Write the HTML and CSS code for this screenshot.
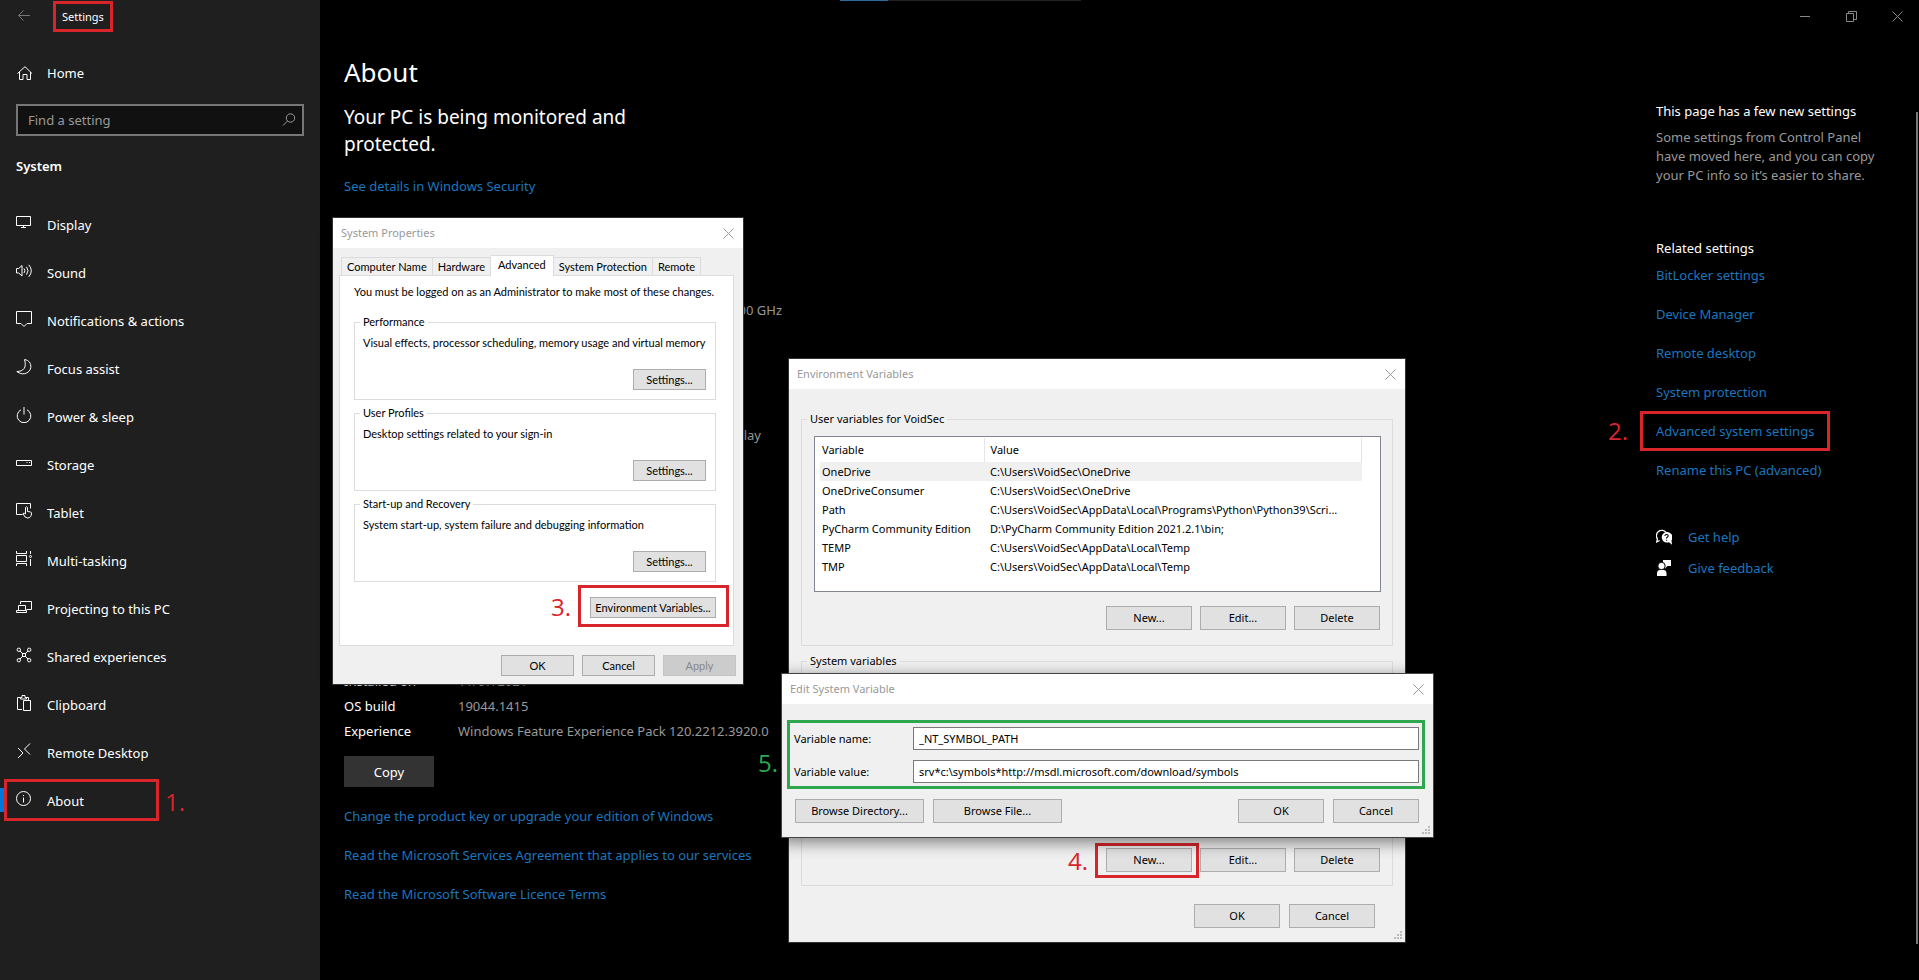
FILE: index.html
```html
<!DOCTYPE html>
<html lang="en">
<head>
<meta charset="utf-8">
<title>Settings</title>
<link rel="stylesheet" href="styles.css">
</head>
<body>
<div class="top-strip"><span class="top-strip-active"></span></div>

<div class="settings">
  <aside class="sidebar">
    <header class="titlebar">
      <button class="back" aria-label="Back"><svg class="icon" viewBox="0 0 16 16"><path d="M14 7.500H2.500M7.500 2.500l-5 5 5 5"/></svg></button>
      <span class="app-name">Settings<span class="frame frame-app"></span></span>
    </header>
    <a class="nav-link home" href="#"><svg class="icon" viewBox="0 0 16 16"><path d="M1.500 8.500L9 1.700l7 6.800M3.500 7v7.500h3.500v-5h4v5h3.500V7"/></svg>Home</a>
    <div class="search">
      <input type="search" aria-label="Find a setting" placeholder="Find a setting">
      <svg class="icon" viewBox="0 0 16 16"><circle cx="9.500" cy="6" r="4.200"/><path d="M6.500 9L2 13.500"/></svg>
    </div>
    <h2 class="section">System</h2>
    <nav class="nav">
      <a class="nav-link" href="#"><svg class="icon" viewBox="0 0 16 16"><path d="M.5 1.500h14v9H.5zM7.500 10.500v2M5 12.500h5"/></svg>Display</a>
      <a class="nav-link" href="#"><svg class="icon" viewBox="0 0 16 16"><path d="M.5 5.500h2.200L6 2.500v10.500L2.700 10H.5zM8 5.500q1.800 2.200 0 4.500M10.500 3.800q3 4 0 7.800M12.800 1.800q5 6 0 12"/></svg>Sound</a>
      <a class="nav-link" href="#"><svg class="icon" viewBox="0 0 16 16"><path d="M.5.5h15v12H11l-3 3-3-3H.5z"/></svg>Notifications &amp; actions</a>
      <a class="nav-link" href="#"><svg class="icon" viewBox="0 0 16 16"><path d="M8.500.600C13 1 15.200 4.500 14.800 8.500 14 13.500 8 17 2 13.300L.8 12.500C7.500 12.500 11 8.500 8.500.600z"/></svg>Focus assist</a>
      <a class="nav-link" href="#"><svg class="icon" viewBox="0 0 16 16"><path d="M5 2.800a6.800 6.800 0 1 0 6 0M8 0v7.500"/></svg>Power &amp; sleep</a>
      <a class="nav-link" href="#"><svg class="icon" viewBox="0 0 16 16"><path d="M.5 5.500h15v5H.5zM10.500 7.500h1M13 7.500h1"/></svg>Storage</a>
      <a class="nav-link" href="#"><svg class="icon" viewBox="0 0 16 16"><path d="M6.500 11.500h-6v-11h14v5M9.500 11V4.500q1-1.500 2 0v4q4 0 4 1.500 0 5-4 5-3 0-4.500-4.500 1-1 2.500.500"/></svg>Tablet</a>
      <a class="nav-link" href="#"><svg class="icon" viewBox="0 0 16 16"><path d="M.5 0v2.500h10V0M.5 15v-2.500h10V15M.5 4.500h10v6H.5zM14.500 0v3M14.500 8v7"/><circle cx="14.500" cy="5.500" r="1"/></svg>Multi-tasking</a>
      <a class="nav-link" href="#"><svg class="icon" viewBox="0 0 16 16"><path d="M4.500 5V2.500h11v8h-5M2.500 6.500h7v5h-7zM.5 13.500v-2h10v2z"/></svg>Projecting to this PC</a>
      <a class="nav-link" href="#"><svg class="icon" viewBox="0 0 16 16"><circle cx="2.800" cy="2.800" r="1.700"/><circle cx="13.200" cy="2.800" r="1.700"/><circle cx="2.800" cy="13.200" r="1.700"/><circle cx="13.200" cy="13.200" r="1.700"/><path d="M4 4l3 3M12 4L9 7M4 12l3-3M12 12L9 9M6.500 6.500h3v3h-3z"/></svg>Shared experiences</a>
      <a class="nav-link" href="#"><svg class="icon" viewBox="0 0 16 16"><path d="M6 14.500H1.500v-12h3M9.500 2.500h3V5M4.500 4V2.500H6v-2h3v2h1.500V4zM7.500 5.500h7v10h-7z"/></svg>Clipboard</a>
      <a class="nav-link" href="#"><svg class="icon" viewBox="0 0 16 16"><path d="M2 5l5 5-5 5M14 .5l-5.500 5.500L14 11.500"/></svg>Remote Desktop</a>
      <a class="nav-link current" href="#"><svg class="icon" viewBox="0 0 16 16"><circle cx="7.500" cy="7.500" r="7"/><path d="M7.500 6.500v5M7.500 4v1"/></svg>About<span class="frame frame-about"></span><span class="step step-1">1.</span></a>
    </nav>
  </aside>

  <main class="page">
    <h1>About</h1>
    <p class="lead">Your PC is being monitored and protected.</p>
    <a class="link" href="#">See details in Windows Security</a>
    <dl class="specs device">
      <dt></dt><dd class="cpu">00 GHz</dd>
      <dt></dt><dd></dd>
      <dt></dt><dd></dd>
      <dt></dt><dd></dd>
      <dt></dt><dd></dd>
      <dt></dt><dd class="pen">lay</dd>
    </dl>
    <dl class="specs windows">
      <dt>Installed on</dt><dd>11/07/2021</dd>
      <dt>OS build</dt><dd>19044.1415</dd>
      <dt>Experience</dt><dd>Windows Feature Experience Pack 120.2212.3920.0</dd>
    </dl>
    <button class="copy">Copy</button>
    <div class="links">
      <a class="link" href="#">Change the product key or upgrade your edition of Windows</a>
      <a class="link" href="#">Read the Microsoft Services Agreement that applies to our services</a>
      <a class="link" href="#">Read the Microsoft Software Licence Terms</a>
    </div>
  </main>

  <aside class="related">
    <div class="window-controls">
      <button aria-label="Minimise"><svg viewBox="0 0 11 11"><path d="M0 5.500h10"/></svg></button>
      <button aria-label="Restore"><svg viewBox="0 0 11 11"><path d="M.5 2.500h7v8h-7zM2.500 2.500v-2h8v8h-3"/></svg></button>
      <button aria-label="Close"><svg viewBox="0 0 11 11"><path d="M.5.5l10 10M10.500.5l-10 10"/></svg></button>
    </div>
    <h3>This page has a few new settings</h3>
    <p class="note">Some settings from Control Panel have moved here, and you can copy your PC info so it’s easier to share.</p>
    <h3 class="related-title">Related settings</h3>
    <div class="links">
      <a class="link" href="#">BitLocker settings</a>
      <a class="link" href="#">Device Manager</a>
      <a class="link" href="#">Remote desktop</a>
      <a class="link" href="#">System protection</a>
      <a class="link" href="#">Advanced system settings<span class="frame frame-advanced"></span><span class="step step-2">2.</span></a>
      <a class="link" href="#">Rename this PC (advanced)</a>
    </div>
    <div class="support">
      <a class="link" href="#"><svg class="solid" viewBox="0 0 16 16"><path d="M1.500 10A5 5 0 1 1 10 3.500M1.500 9.500L.7 13l3-1.500" fill="none" stroke="#fff" stroke-width="1.300"/><path d="M10.500 3a5.300 5.300 0 1 0 2.500 10.200l3 2.600-.500-4.500A5.300 5.300 0 0 0 10.500 3z"/><path d="M8.800 7q.2-1.500 1.800-1.500T12.200 7q0 .8-1.600 1.800v.8M10.600 10.800v1" fill="none" stroke="#000" stroke-width="1.100"/></svg>Get help</a>
      <a class="link" href="#"><svg class="solid" viewBox="0 0 16 16"><path d="M7 0h8v6h-3.500L9 8.500V6.500L7 4z"/><circle cx="5.500" cy="6" r="3.700" stroke="#000"/><path d="M1 16v-2.500Q1 10 4 10h3.500q3 0 3 3.500V16z"/></svg>Give feedback</a>
    </div>
  </aside>
  <div class="scrollbar"></div>
</div>

<section class="dialog properties" aria-label="System Properties">
  <header class="caption"><span>System Properties</span><button class="close" aria-label="Close"><svg viewBox="0 0 11 11"><path d="M.5.5l10 10M10.500.5l-10 10"/></svg></button></header>
  <div class="tabs">
    <button class="tab">Computer Name</button><button class="tab">Hardware</button><button class="tab selected">Advanced</button><button class="tab">System Protection</button><button class="tab">Remote</button>
  </div>
  <div class="tab-panel">
    <p>You must be logged on as an Administrator to make most of these changes.</p>
    <fieldset><legend>Performance</legend><p>Visual effects, processor scheduling, memory usage and virtual memory</p><button class="btn">Settings...</button></fieldset>
    <fieldset><legend>User Profiles</legend><p>Desktop settings related to your sign-in</p><button class="btn">Settings...</button></fieldset>
    <fieldset><legend>Start-up and Recovery</legend><p>System start-up, system failure and debugging information</p><button class="btn">Settings...</button></fieldset>
    <div class="env-row"><button class="btn">Environment Variables...<span class="frame frame-env"></span></button><span class="step step-3">3.</span></div>
  </div>
  <footer class="actions"><button class="btn">OK</button><button class="btn">Cancel</button><button class="btn" disabled>Apply</button></footer>
</section>

<section class="dialog environment" aria-label="Environment Variables">
  <header class="caption"><span>Environment Variables</span><button class="close" aria-label="Close"><svg viewBox="0 0 11 11"><path d="M.5.5l10 10M10.500.5l-10 10"/></svg></button></header>
  <fieldset class="user-vars">
    <legend>User variables for VoidSec</legend>
    <div class="list">
      <table>
        <thead><tr><th>Variable</th><th>Value</th></tr></thead>
        <tbody>
          <tr class="picked"><td>OneDrive</td><td>C:\Users\VoidSec\OneDrive</td></tr>
          <tr><td>OneDriveConsumer</td><td>C:\Users\VoidSec\OneDrive</td></tr>
          <tr><td>Path</td><td>C:\Users\VoidSec\AppData\Local\Programs\Python\Python39\Scri...</td></tr>
          <tr><td>PyCharm Community Edition</td><td>D:\PyCharm Community Edition 2021.2.1\bin;</td></tr>
          <tr><td>TEMP</td><td>C:\Users\VoidSec\AppData\Local\Temp</td></tr>
          <tr><td>TMP</td><td>C:\Users\VoidSec\AppData\Local\Temp</td></tr>
        </tbody>
      </table>
    </div>
    <div class="row"><button class="btn">New...</button><button class="btn">Edit...</button><button class="btn">Delete</button></div>
  </fieldset>
  <fieldset class="system-vars">
    <legend>System variables</legend>
    <div class="row"><button class="btn">New...<span class="frame frame-new"></span></button><button class="btn">Edit...</button><button class="btn">Delete</button><span class="step step-4">4.</span></div>
  </fieldset>
  <footer class="actions"><button class="btn">OK</button><button class="btn">Cancel</button></footer>
  <svg class="grip" viewBox="0 0 9 9"><path d="M6 0h2v2H6zM3 3h2v2H3zM6 3h2v2H6zM0 6h2v2H0zM3 6h2v2H3zM6 6h2v2H6z"/></svg>
</section>

<section class="dialog edit" aria-label="Edit System Variable">
  <header class="caption"><span>Edit System Variable</span><button class="close" aria-label="Close"><svg viewBox="0 0 11 11"><path d="M.5.5l10 10M10.500.5l-10 10"/></svg></button></header>
  <div class="fields">
    <label for="var-name">Variable name:</label><input id="var-name" type="text" value="_NT_SYMBOL_PATH">
    <label for="var-value">Variable value:</label><input id="var-value" type="text" value="srv*c:\symbols*http://msdl.microsoft.com/download/symbols">
    <span class="step step-5">5.</span>
  </div>
  <footer class="actions"><button class="btn wide">Browse Directory...</button><button class="btn wide">Browse File...</button><span class="spacer"></span><button class="btn">OK</button><button class="btn">Cancel</button></footer>
  <svg class="grip" viewBox="0 0 9 9"><path d="M6 0h2v2H6zM3 3h2v2H3zM6 3h2v2H6zM0 6h2v2H0zM3 6h2v2H3zM6 6h2v2H6z"/></svg>
</section>
</body>
</html>
```
FILE: styles.css
```css
* { box-sizing: border-box; }
body {
  position: relative;
  margin: 0;
  min-height: 100vh;
  background: #000;
  color: #fff;
  font: 13px/20px "Noto Sans", "Open Sans", sans-serif;
}
h1, h2, h3, p, dl, dd { margin: 0; font-weight: 400; }
button, input { font: inherit; color: inherit; }
button { padding: 0; border: 0; background: none; }
a { color: inherit; text-decoration: none; }
svg { fill: none; stroke: currentColor; }

/* thin indicator at the top edge of the screen */
.top-strip { position: absolute; top: 0; left: 840px; width: 241px; height: 1px; background: #222; }
.top-strip-active { display: block; width: 48px; height: 1px; background: #2a6a9a; }

/* settings window */
.settings { display: flex; min-height: 100vh; }
.sidebar { flex: none; width: 320px; background: #1f1f1f; }
.titlebar { display: flex; align-items: center; height: 33px; padding-left: 16px; }
.back { width: 16px; height: 18px; color: #777; }
.icon { flex: none; width: 16px; height: 16px; }
.app-name { position: relative; margin-left: 30px; font-size: 11px; }
.home { margin-top: 16px; }
.nav-link { position: relative; display: flex; align-items: center; gap: 15px; height: 48px; padding-left: 16px; }
.nav .icon { margin-bottom: 4px; }
.search { display: flex; align-items: center; height: 32px; margin: 7px 16px 20px; padding: 0 5px 0 10px; border: 2px solid #777; background: #111; color: #999; }
.search input { flex: 1; min-width: 0; padding: 0; border: 0; outline: 0; background: none; }
.search input::placeholder { color: #999; opacity: 1; }
.section { margin: 0 16px 25px; font-size: 13px; line-height: 20px; font-weight: 600; }
.current::before { content: ""; position: absolute; left: 0; top: 11px; width: 4px; height: 24px; background: #0078d7; }

.page { flex: 1; padding: 54px 24px 24px; }
.page h1 { margin-bottom: 14px; font-size: 26px; line-height: 36px; }
.lead { max-width: 310px; margin-bottom: 18px; font-size: 19px; line-height: 27px; }
.link { position: relative; color: #1a76be; }
.specs { display: grid; grid-template-columns: 114px auto; grid-auto-rows: 25px; line-height: 25px; }
.specs dd { color: #999; white-space: nowrap; }
.device { margin-top: 102px; margin-bottom: 221px; }
.device .cpu { width: 324px; text-align: right; }
.device .pen { width: 303px; text-align: right; }
.copy { width: 90px; height: 31px; margin: 12px 0 19px; background: #333; }
.links { display: flex; flex-direction: column; align-items: flex-start; gap: 19px; }

.related { flex: none; width: 263px; }
.window-controls { display: flex; justify-content: flex-end; gap: 35px; height: 32px; margin-right: 16px; color: #888; }
.window-controls svg { display: block; width: 11px; height: 11px; }
.related h3 { font-size: 13px; line-height: 20px; }
.window-controls + h3 { margin-top: 69px; }
.note { width: 230px; margin: 7px 0 53px; color: #999; line-height: 19px; }
.related .related-title { margin-bottom: 7px; }
.support { display: grid; gap: 11px; margin-top: 47px; }
.support .link { display: flex; align-items: center; gap: 16px; }
.solid { width: 16px; height: 16px; fill: #fff; stroke: none; }
.scrollbar { position: absolute; right: 1px; top: 112px; bottom: 36px; width: 2px; background: #777; }

/* numbered callouts */
.frame { position: absolute; border: 3px solid #d8252c; pointer-events: none; }
.step { position: absolute; color: #d8252c; font-family: "Open Sans", "Noto Sans", sans-serif; font-size: 24px; line-height: 28px; }
.frame-app { inset: -6px -9px -5px -9px; }
.frame-about { left: 4px; top: 2px; width: 155px; height: 42px; }
.step-1 { left: 165px; top: 11px; }
.frame-advanced { left: -16px; top: -10px; width: 190px; height: 40px; }
.step-2 { left: -48px; top: -4px; }
.frame-env { left: -13px; top: -13px; width: 151px; height: 42px; }
.step-3 { right: 145px; top: 5px; }
.frame-new { left: -12px; top: -6px; width: 104px; height: 35px; }
.step-4 { right: 292px; top: -1px; }
.step-5 { left: -32px; top: 26px; color: #2ea84f; }

/* classic dialogs */
.dialog { position: absolute; background: #f0f0f0; color: #000; font-size: 11px; line-height: 16px; box-shadow: 0 0 0 1px #333, 0 4px 12px rgba(0, 0, 0, .35); }
.caption { display: flex; align-items: center; justify-content: space-between; height: 30px; padding: 0 9px 0 8px; background: #fff; color: #999; }
.close svg { display: block; width: 11px; height: 11px; }
.dialog fieldset { min-width: 0; margin: 0; border: 1px solid #dcdcdc; }
.dialog legend { padding: 0 3px; line-height: 14px; }
.btn { position: relative; width: 86px; height: 24px; border: 1px solid #adadad; background: #e1e1e1; text-align: center; }
.btn:disabled { border-color: #c4c4c4; background: #ccc; color: #888; }
.actions, .row { position: relative; display: flex; justify-content: flex-end; gap: 9px; }
.row { gap: 8px; margin-right: 1px; }
.grip { position: absolute; right: 2px; bottom: 2px; width: 9px; height: 9px; fill: #bbb; stroke: none; }

.properties { left: 333px; top: 218px; width: 410px; height: 466px; font-family: Lato, "Liberation Sans", sans-serif; white-space: nowrap; }
.properties .caption { font-family: "Noto Sans", sans-serif; }
.tabs { display: flex; align-items: flex-end; height: 27px; padding-left: 8px; }
.tab { height: 18px; padding: 0 5px; border: 1px solid #dcdcdc; border-bottom: 0; border-left-width: 0; }
.tab.selected { position: relative; height: 21px; margin-bottom: -1px; padding: 0 7px 2px; background: #fff; }
.tab:first-child { border-left-width: 1px; }
.tab-panel { height: 371px; margin: 0 9px 0 6px; padding: 8px 17px 0 14px; border: 1px solid #dcdcdc; background: #fff; }
.tab-panel fieldset { height: 85px; margin: 0 0 6px; padding: 6px 9px 9px 8px; display: flex; flex-direction: column; justify-content: space-between; }
.tab-panel > p { margin-bottom: 15px; }
.tab-panel legend { margin-left: -3px; }
.tab-panel fieldset .btn { align-self: flex-end; }
.properties .btn { width: 73px; height: 21px; }
.env-row { position: relative; display: flex; justify-content: flex-end; padding-top: 9px; }
.properties .env-row .btn { width: 126px; }
.properties .actions { gap: 8px; margin-top: 9px; padding-right: 7px; }

.environment { left: 789px; top: 359px; width: 616px; height: 583px; }
.environment fieldset { margin: 0 12px; padding: 10px 11px 15px 12px; }
.environment legend { margin-left: -7px; }
.environment .user-vars { height: 234px; margin-top: 23px; }
.list { height: 156px; border: 1px solid #828790; background: #fff; padding: 1px 0 0 5px; margin-bottom: 14px; }
.list table { width: 542px; border-collapse: collapse; table-layout: fixed; }
.list th, .list td { height: 19px; padding: 0 0 0 2px; text-align: left; font-weight: 400; white-space: nowrap; }
.list th { height: 24px; border-right: 1px solid #e5e5e5; }
.list th:first-child { width: 164px; }
.list th + th, .list td + td { padding-left: 6px; }
.picked { background: #f0f0f0; }
.environment .system-vars { height: 232px; margin-top: 8px; display: flex; flex-direction: column; justify-content: flex-end; padding-bottom: 13px; }
.environment .actions { margin-top: 18px; padding-right: 30px; }

.edit { left: 782px; top: 674px; width: 651px; height: 163px; box-shadow: 0 0 0 1px #444, 0 4px 14px 2px rgba(0, 0, 0, .45); }
.fields { position: relative; display: grid; grid-template-columns: 119px 1fr; align-items: center; gap: 10px 0; margin: 16px 8px 10px 5px; padding: 4px 3px 3px 4px; border: 3px solid #2ea84f; }
.fields input { width: 100%; height: 23px; padding: 0 5px; border: 1px solid #7a7a7a; background: #fff; outline: 0; }
.edit .actions { padding: 0 14px 0 13px; }
.btn.wide { width: 129px; }
.spacer { flex: 1; }
```
